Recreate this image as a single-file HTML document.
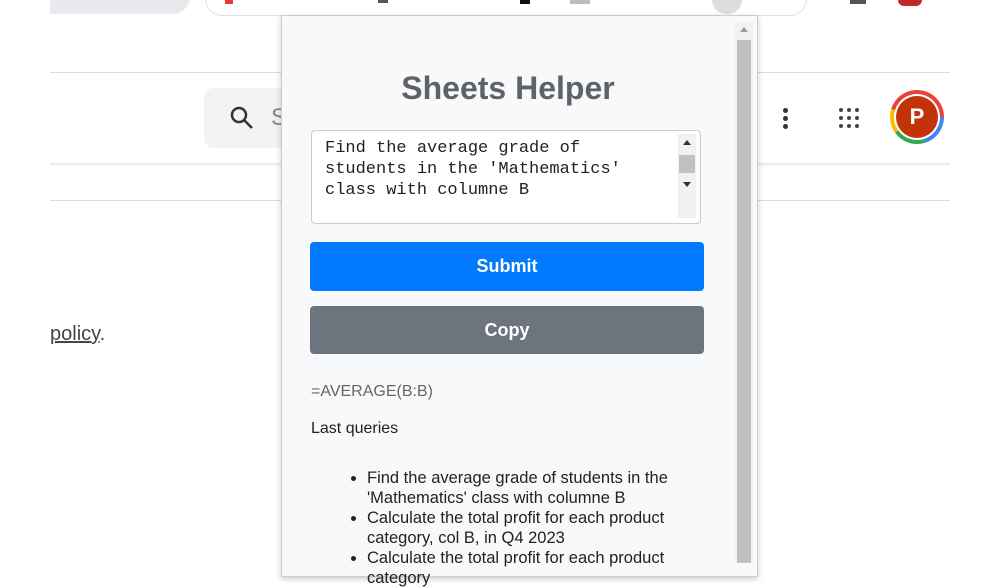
<!DOCTYPE html>
<html><head><style>
body{margin:0;width:1000px;height:563px;overflow:hidden;background:#fff;font-family:"Liberation Sans",sans-serif;position:relative}
.abs{position:absolute}
</style></head><body>
<div class="abs" style="left:50px;top:-20px;width:140px;height:34px;background:#e8eaed;border-radius:0 0 17px 0"></div>
<div class="abs" style="left:205px;top:-20px;width:600px;height:34px;border:1px solid #e0e0e0;border-radius:17px;background:#fff"></div>
<div class="abs" style="left:225px;top:0;width:8px;height:4px;background:#e53935"></div>
<div class="abs" style="left:378px;top:0;width:10px;height:3px;background:#555"></div>
<div class="abs" style="left:520px;top:0;width:10px;height:4px;background:#111"></div>
<div class="abs" style="left:570px;top:0;width:20px;height:4px;background:#bbb"></div>
<div class="abs" style="left:712px;top:0;width:30px;height:14px;background:#ddd;border-radius:0 0 15px 15px"></div>
<div class="abs" style="left:850px;top:0;width:16px;height:4px;background:#555"></div>
<div class="abs" style="left:898px;top:0;width:24px;height:6px;background:#c62828;border-radius:0 0 12px 12px"></div>
<div class="abs" style="left:50px;top:72px;width:900px;height:1px;background:#dadce0"></div>
<div class="abs" style="left:204px;top:88px;width:120px;height:60px;background:#f1f3f4;border-radius:10px"></div>
<svg class="abs" style="left:228px;top:104px" width="28" height="28" viewBox="0 0 28 28"><circle cx="11" cy="11" r="7" fill="none" stroke="#333" stroke-width="2.5"/><line x1="16" y1="16" x2="24" y2="24" stroke="#333" stroke-width="2.5"/></svg>
<div class="abs" style="left:271px;top:104px;font-size:24px;color:#888">S</div>
<div class="abs" style="left:50px;top:163px;width:900px;height:4px;background:linear-gradient(#e8e8e8,#fff)"></div>
<div class="abs" style="left:50px;top:200px;width:900px;height:1px;background:#dadce0"></div>
<div class="abs" style="left:783px;top:108px;width:5px;height:5px;border-radius:50%;background:#333;box-shadow:0 8px 0 #333,0 16px 0 #333"></div>
<svg class="abs" style="left:838px;top:107px" width="24" height="24"><g fill="#444"><circle cx="3" cy="3" r="2"/><circle cx="11" cy="3" r="2"/><circle cx="19" cy="3" r="2"/><circle cx="3" cy="11" r="2"/><circle cx="11" cy="11" r="2"/><circle cx="19" cy="11" r="2"/><circle cx="3" cy="19" r="2"/><circle cx="11" cy="19" r="2"/><circle cx="19" cy="19" r="2"/></g></svg>
<div class="abs" style="left:890px;top:90px;width:54px;height:54px;border-radius:50%;background:conic-gradient(#ea4335 0 25%,#4285f4 25% 45%,#34a853 45% 65%,#fbbc05 65% 80%,#ea4335 80%)"></div>
<div class="abs" style="left:894px;top:94px;width:46px;height:46px;border-radius:50%;background:#fff"></div>
<div class="abs" style="left:896px;top:96px;width:42px;height:42px;border-radius:50%;background:#c4320a;color:#fff;font-size:22px;font-weight:bold;text-align:center;line-height:42px">P</div>
<div class="abs" style="left:50px;top:323px;font-size:20px;color:#444"><u>policy</u>.</div>

<div class="abs" style="left:281px;top:15px;width:475px;height:560px;background:#f8f9fa;border:1px solid #ccc;box-shadow:0 2px 6px rgba(0,0,0,.2)"></div>
<div class="abs" style="left:735px;top:22px;width:18px;height:541px;background:#f1f1f1"></div>
<div class="abs" style="left:737px;top:40px;width:14px;height:523px;background:#c1c1c1"></div>
<div class="abs" style="left:740px;top:27px;width:0;height:0;border-left:4px solid transparent;border-right:4px solid transparent;border-bottom:5px solid #999"></div>
<div class="abs" style="left:281px;top:70px;width:454px;text-align:center;font-size:32px;font-weight:bold;color:#5f6368">Sheets Helper</div>
<div class="abs" style="left:311px;top:130px;width:388px;height:92px;background:#fff;border:1px solid #ccc;border-radius:4px"></div>
<div class="abs" style="left:325px;top:138px;font-family:'Liberation Mono',monospace;font-size:17px;line-height:21px;color:#222;white-space:pre">Find the average grade of
students in the 'Mathematics'
class with columne B</div>
<div class="abs" style="left:678px;top:134px;width:18px;height:84px;background:#f1f1f1"></div>
<div class="abs" style="left:679px;top:155px;width:16px;height:18px;background:#c1c1c1"></div>
<div class="abs" style="left:683px;top:140px;border-left:4px solid transparent;border-right:4px solid transparent;border-bottom:5px solid #333"></div>
<div class="abs" style="left:683px;top:182px;border-left:4px solid transparent;border-right:4px solid transparent;border-top:5px solid #333"></div>
<div class="abs" style="left:310px;top:242px;width:394px;height:49px;background:#007bff;border-radius:4px;color:#fff;font-size:18px;font-weight:bold;text-align:center;line-height:49px">Submit</div>
<div class="abs" style="left:310px;top:306px;width:394px;height:48px;background:#6c757d;border-radius:4px;color:#fff;font-size:18px;font-weight:bold;text-align:center;line-height:48px">Copy</div>
<div class="abs" style="left:311px;top:383px;font-size:16px;color:#666">=AVERAGE(B:B)</div>
<div class="abs" style="left:311px;top:420px;font-size:16px;color:#222">Last queries</div>
<ul class="abs" style="left:327px;top:468px;margin:0;padding-left:40px;width:330px;font-size:16.5px;line-height:20px;color:#222">
<li>Find the average grade of students in the 'Mathematics' class with columne B</li>
<li>Calculate the total profit for each product category, col B, in Q4 2023</li>
<li>Calculate the total profit for each product category</li>
</ul>
</body></html>
